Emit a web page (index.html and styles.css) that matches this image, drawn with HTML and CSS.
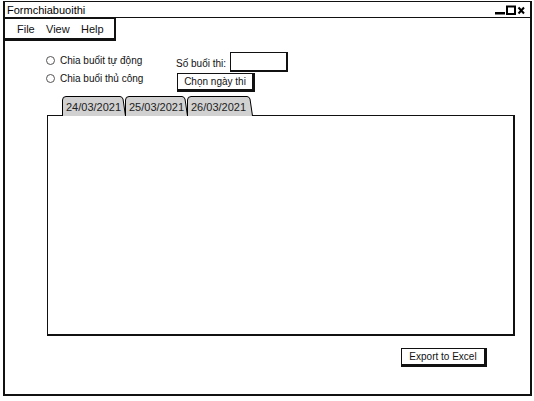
FILE: index.html
```html
<!DOCTYPE html>
<html>
<head>
<meta charset="utf-8">
<link rel="stylesheet" href="styles.css">
</head>
<body>
<div class="window">
  <div class="titlebar">
    <span class="title">Formchiabuoithi</span>
    <span class="controls">
      <svg width="31" height="10" viewBox="0 0 31 10">
        <rect x="0" y="7" width="10" height="2.5" fill="#000"/>
        <rect x="12" y="1.5" width="8" height="7.5" fill="none" stroke="#000" stroke-width="2"/>
        <path d="M23.5 2.5 L29 8.5 M29 2.5 L23.5 8.5" stroke="#000" stroke-width="2"/>
      </svg>
    </span>
  </div>
  <div class="menubar">
    <span>File</span><span>View</span><span>Help</span>
  </div>
  <div class="form">
    <div class="radios">
      <label class="radio"><span class="dot"></span>Chia buổit tự động</label>
      <label class="radio"><span class="dot"></span>Chia buổi thủ công</label>
    </div>
    <div class="right">
      <div class="field"><span>Số buổi thi:</span><span class="input"></span></div>
      <div class="btn pick">Chọn ngày thi</div>
    </div>
  </div>
  <div class="tabs">
    <div class="tab t1">
      <svg class="tabshape" width="64" height="20" viewBox="0 0 64 20"><path d="M0.5 20 V4 Q0.5 0.5 4 0.5 H58 Q60 0.5 61 3 L63.5 20" fill="#d1d1d1" stroke="#000" stroke-width="1"/></svg>
      <span>24/03/2021</span>
    </div>
    <div class="tab t2">
      <svg class="tabshape" width="63" height="20" viewBox="0 0 63 20"><path d="M0.5 20 V4 Q0.5 0.5 4 0.5 H57 Q59 0.5 60 3 L62.5 20" fill="#d1d1d1" stroke="#000" stroke-width="1"/></svg>
      <span>25/03/2021</span>
    </div>
    <div class="tab t3">
      <svg class="tabshape" width="66" height="20" viewBox="0 0 66 20"><path d="M0.5 20 V4 Q0.5 0.5 4 0.5 H60 Q62 0.5 63 3 L65.5 20" fill="#d1d1d1" stroke="#000" stroke-width="1"/></svg>
      <span>26/03/2021</span>
    </div>
  </div>
  <div class="panel"></div>
  <div class="footer">
    <div class="btn export">Export to Excel</div>
  </div>
</div>
</body>
</html>
```

FILE: styles.css
```css
* { box-sizing: border-box; }
body {
  margin: 0;
  background: #fff;
  font-family: "Liberation Sans", Arial, sans-serif;
  font-size: 11px;
  color: #111;
}
.window {
  margin: 1px 0 0 3px;
  width: 529px;
  height: 395px;
  border: 2px solid #111;
  border-top: 1px solid #111;
  display: flex;
  flex-direction: column;
}
.titlebar {
  height: 16px;
  border-bottom: 1px solid #111;
  display: flex;
  align-items: center;
  justify-content: space-between;
  padding: 0 4px 0 2px;
}
.title { font-size: 11px; color: #000; }
.controls { display: flex; align-items: center; }
.controls svg { display: block; }
.menubar {
  margin-left: -2px;
  width: 113px;
  height: 23px;
  border: 2px solid #111;
  border-top: 1px solid #111;
  border-bottom-width: 3px;
  display: flex;
  align-items: center;
  padding-left: 12px;
  font-size: 11px;
}
.menubar span:nth-child(1) { width: 29px; }
.menubar span:nth-child(2) { width: 35px; }
.form {
  display: flex;
  padding: 12px 0 0 41px;
  height: 52px;
  font-size: 10px;
}
.radios {
  display: flex;
  flex-direction: column;
  gap: 6px;
  width: 130px;
  padding-top: 1px;
}
.radio {
  display: flex;
  align-items: center;
  height: 12px;
}
.dot {
  width: 9px;
  height: 9px;
  border: 1px solid #555;
  border-radius: 50%;
  margin-right: 5px;
}
.right {
  display: flex;
  flex-direction: column;
}
.field {
  display: flex;
  align-items: center;
  height: 20px;
  gap: 4px;
  margin-top: -1px;
}
.field span:first-child { padding-top: 2px; }
.input {
  width: 58px;
  height: 20px;
  border: 2px solid #111;
  border-top-width: 1px;
  border-left-width: 1px;
}
.btn {
  border: 1px solid #111;
  border-right-width: 3px;
  border-bottom-width: 3px;
  display: flex;
  align-items: center;
  justify-content: center;
  font-size: 10px;
  background: #fff;
}
.pick {
  width: 78px;
  height: 19px;
  margin-top: 1px;
  margin-left: 1px;
}
.tabs {
  display: flex;
  padding-left: 57px;
  height: 20px;
  margin-top: 3px;
  position: relative;
  z-index: 1;
}
.tab {
  position: relative;
  height: 20px;
  display: flex;
  align-items: center;
  padding-left: 4px;
  padding-top: 2px;
  font-size: 11px;
  color: #222;
}
.tab span { position: relative; }
.tabshape { position: absolute; left: 0; top: 0; }
.t1 { width: 63px; }
.t2 { width: 62px; }
.t3 { width: 66px; }
.panel {
  margin: -1px 0 0 42px;
  width: 468px;
  height: 221px;
  border: 2px solid #111;
  border-top-width: 1px;
  border-left-width: 1px;
  position: relative;
  z-index: 0;
}
.footer {
  display: flex;
  justify-content: flex-end;
  padding: 12px 43px 0 0;
}
.export {
  width: 86px;
  height: 19px;
}
```
